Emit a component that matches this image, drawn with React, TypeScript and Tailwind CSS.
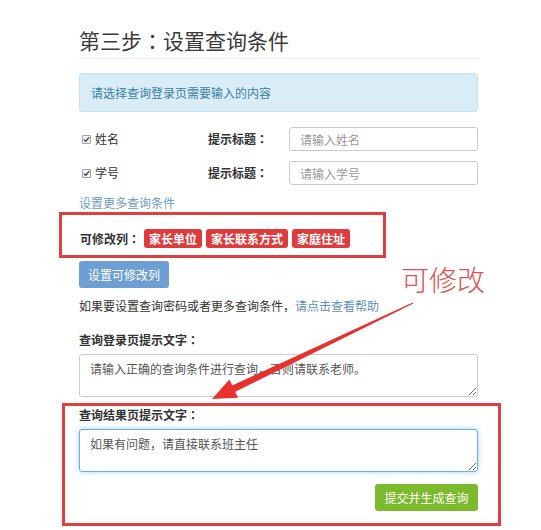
import { ReactNode } from "react";

// full-width colon, centred as in the screenshot
function C() {
  return <span className="font-['Noto_Sans_CJK_JP',sans-serif]">：</span>;
}

function Check() {
  return (
    <span className="inline-flex items-center justify-center w-[9px] h-[9px] border border-[#a0a0a0] bg-[#f2f2f2] rounded-[1px]">
      <svg width="7" height="7" viewBox="0 0 7 7">
        <path d="M1 3.6 L2.8 5.3 L6 1.4" fill="none" stroke="#333" strokeWidth="1.3" />
      </svg>
    </span>
  );
}

function FieldRow({ name, placeholder, className }: { name: string; placeholder: string; className: string }) {
  return (
    <div className={`flex items-center h-[24px] ${className}`}>
      <div className="w-[129px] flex items-center pl-[3px] gap-[4px]">
        <Check />
        <span>{name}</span>
      </div>
      <div className="w-[81px] font-bold">
        提示标题<C />
      </div>
      <input
        placeholder={placeholder}
        className="w-[189px] h-[24px] border border-[#ccc] rounded-[3px] px-[10px] text-[12px] placeholder:text-[#999] outline-none"
      />
    </div>
  );
}

function Tag({ children }: { children: ReactNode }) {
  return (
    <span className="h-[19px] px-[5px] flex items-center rounded-[3px] bg-[#df3b3d] text-white font-bold text-[12px]">
      {children}
    </span>
  );
}

export default function App() {
  return (
    <div className="relative w-[541px] h-[530px] bg-white text-[12px] leading-[18px] text-[#333] font-['Noto_Sans_CJK_SC',sans-serif] overflow-hidden">
      <div className="pl-[79px] w-[478px]">
        <h2 className="h-[59px] pt-[27px] text-[21px] leading-[26px] font-normal text-[#3a3a3a] border-b border-[#eee]">
          第三步<C />设置查询条件
        </h2>

        <div className="mt-[14px] h-[39px] flex items-center px-[11px] bg-[#d9edf7] border border-[#c4e3f0] rounded-[3px] text-[#3b7ea6]">
          请选择查询登录页需要输入的内容
        </div>

        <FieldRow name="姓名" placeholder="请输入姓名" className="mt-[15px]" />
        <FieldRow name="学号" placeholder="请输入学号" className="mt-[10px]" />

        <div className="mt-[9px] text-[#6b9bc9]">设置更多查询条件</div>

        <div className="ml-[-20px] w-[327px] h-[46px] border-[3px] border-[#de3f3f] pl-[18px] pt-[14px]">
          <div className="flex items-center gap-[4px] h-[19px]">
            <span className="font-bold">
              可修改列<C />
            </span>
            <Tag>家长单位</Tag>
            <Tag>家长联系方式</Tag>
            <Tag>家庭住址</Tag>
          </div>
        </div>

        <button className="mt-[3px] w-[90px] h-[27px] rounded-[3px] bg-[#6d9fd5] text-white text-[12px]">
          设置可修改列
        </button>

        <div className="mt-[9px]">
          如果要设置查询密码或者更多查询条件，<span className="text-[#5e8fc2]">请点击查看帮助</span>
        </div>

        <div className="mt-[16px] font-bold">
          查询登录页提示文字<C />
        </div>
        <textarea
          readOnly
          defaultValue="请输入正确的查询条件进行查询，否则请联系老师。"
          className="block mt-[5px] w-[399px] h-[43px] border border-[#ccc] rounded-[3px] px-[10px] pt-[5px] text-[12px] text-[#555] outline-none"
        />

        <div className="mt-[6px] ml-[-17px] w-[439px] border-[3px] border-[#de3f3f] pl-[14px] pr-[20px] pb-[12px]">
          <div className="font-bold">
            查询结果页提示文字<C />
          </div>
          <textarea
            readOnly
            defaultValue="如果有问题，请直接联系班主任"
            className="block mt-[5px] w-[399px] h-[43px] border border-[#66afe9] rounded-[3px] px-[10px] pt-[5px] text-[12px] text-[#555] outline-none shadow-[0_0_5px_rgba(102,175,233,0.6)]"
          />
          <div className="flex justify-end mt-[12px]">
            <button className="w-[103px] h-[27px] rounded-[3px] bg-[#7bba2a] text-white text-[12px]">
              提交并生成查询
            </button>
          </div>
        </div>
      </div>

      <div className="absolute left-[401px] top-[263px] text-[28px] leading-[32px] text-[#e0514f] font-light">
        可修改
      </div>

      <svg className="absolute left-0 top-0 pointer-events-none" width="541" height="530">
        <polygon
          points="412.7,302.5 232.2,385.5 229.4,379.6 212,399 238,397.7 235.2,391.8 413.3,303.5"
          fill="#e8302e"
        />
      </svg>
    </div>
  );
}
